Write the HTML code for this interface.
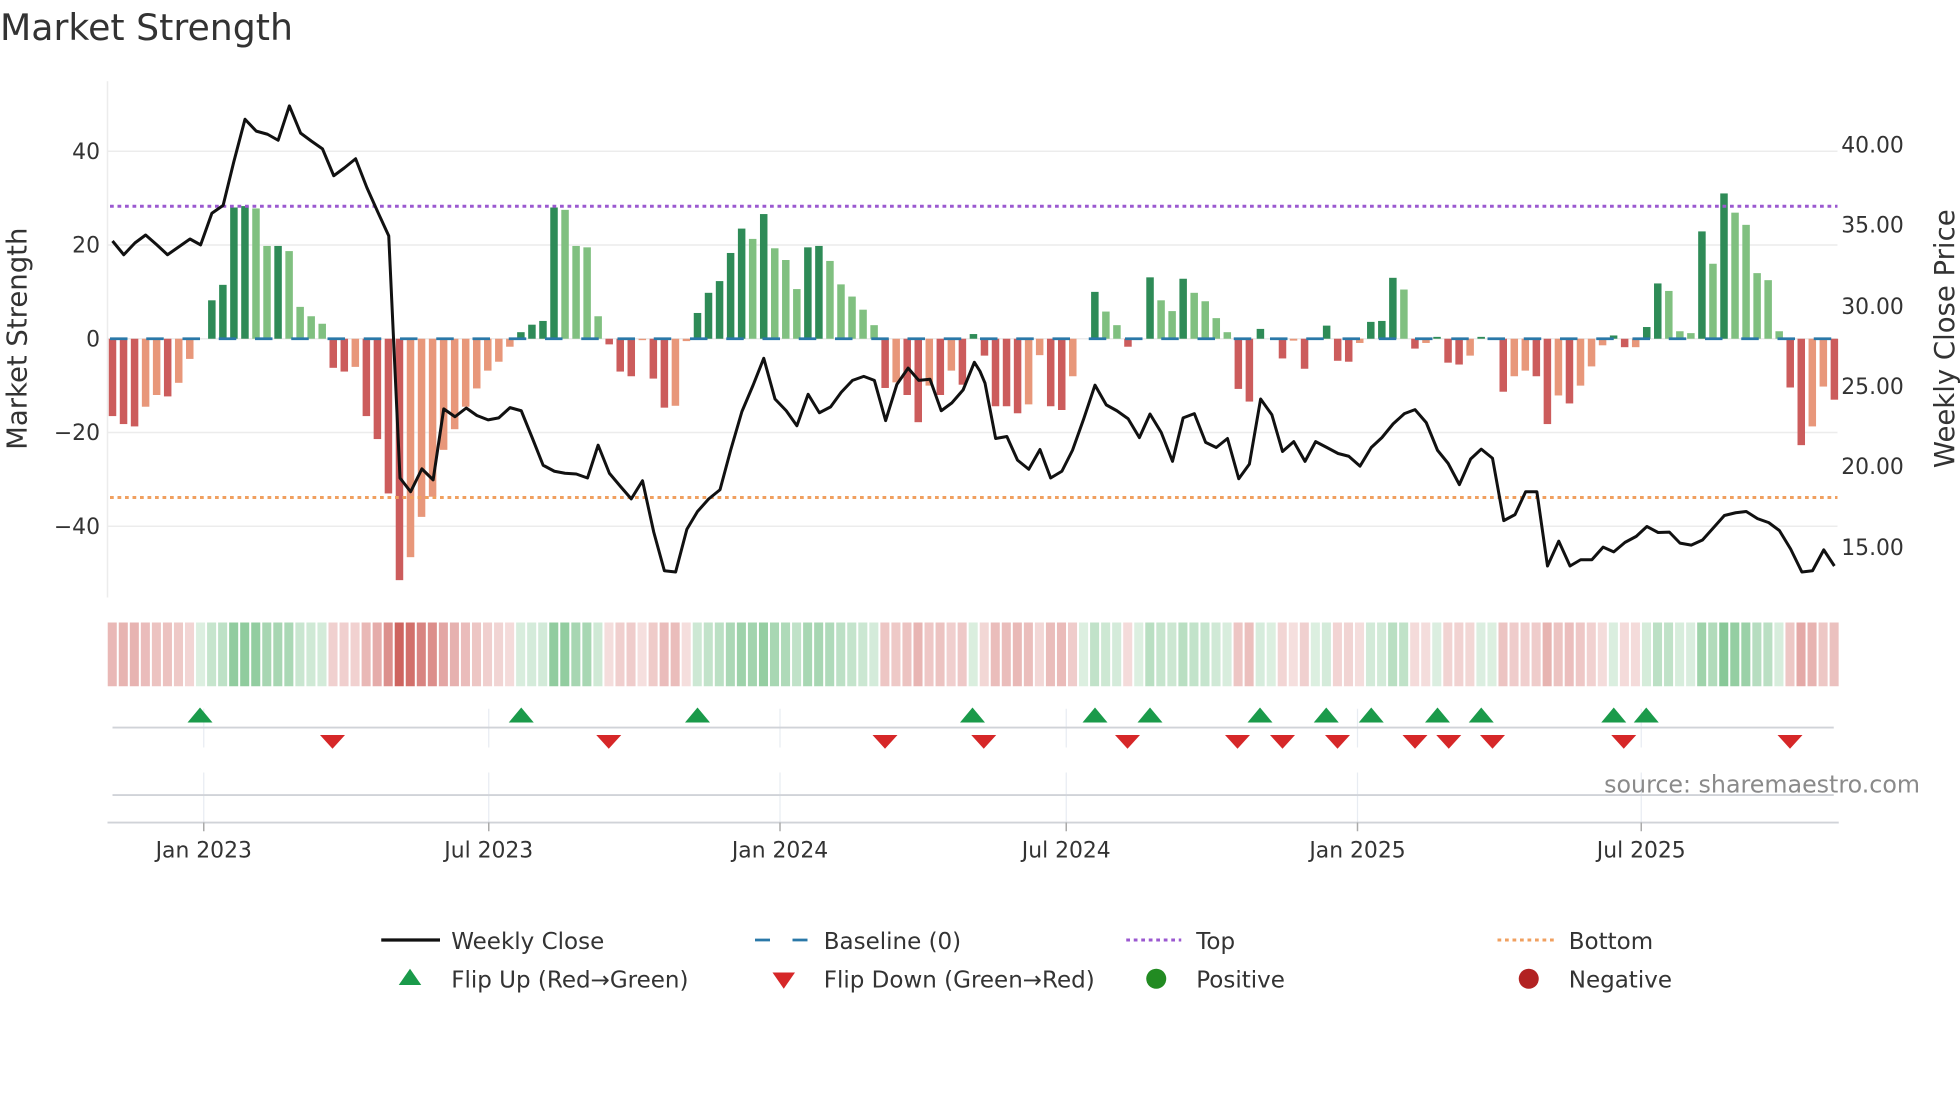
<!DOCTYPE html>
<html><head><meta charset="utf-8">
<style>
html,body{margin:0;padding:0;background:#fff;}
svg{display:block;font-family:"DejaVu Sans","Liberation Sans",sans-serif;}
</style></head>
<body>
<svg id="c" width="1960" height="1102" viewBox="0 0 1568 881.6" xmlns="http://www.w3.org/2000/svg">
<rect width="1568" height="882" fill="#fff"/>
<text x="0" y="32" font-size="29" fill="#333">Market Strength</text>
<g id="grid" stroke="#ececec" stroke-width="1.2">
<line x1="86" x2="1470" y1="121" y2="121"/>
<line x1="86" x2="1470" y1="196" y2="196"/>
<line x1="86" x2="1470" y1="271" y2="271"/>
<line x1="86" x2="1470" y1="346" y2="346"/>
<line x1="86" x2="1470" y1="421" y2="421"/>
</g>
<line x1="86" x2="86" y1="65" y2="478" stroke="#ececec" stroke-width="1.2"/>
<g font-size="17.5" fill="#333" text-anchor="end">
<text x="80" y="127">40</text><text x="80" y="202">20</text><text x="80" y="277">0</text>
<text x="80" y="352">−20</text><text x="80" y="427">−40</text>
</g>
<g font-size="17.5" fill="#333">
<text x="1473" y="122">40.00</text><text x="1473" y="186">35.00</text><text x="1473" y="251">30.00</text>
<text x="1473" y="315">25.00</text><text x="1473" y="379">20.00</text><text x="1473" y="444">15.00</text>
</g>
<text transform="translate(21,271) rotate(-90)" font-size="22" fill="#333" text-anchor="middle">Market Strength</text>
<text transform="translate(1563,271) rotate(-90)" font-size="22" fill="#333" text-anchor="middle">Weekly Close Price</text>
<g id="bars"></g>
<line x1="88" x2="1470" y1="271" y2="271" stroke="#2a78a8" stroke-width="2.2" stroke-dasharray="14 15"/>
<line x1="88" x2="1470" y1="165" y2="165" stroke="#9b59d0" stroke-width="2.4" stroke-dasharray="3 3"/>
<line x1="88" x2="1470" y1="398" y2="398" stroke="#f0a060" stroke-width="2.4" stroke-dasharray="3 3"/>
<polyline id="price" fill="none" stroke="#111" stroke-width="2.4" stroke-linejoin="round"/>
<g id="heat"></g>
<g stroke="#e8ecf2" stroke-width="1">
<line x1="163" x2="163" y1="567" y2="598"/><line x1="391" x2="391" y1="567" y2="598"/>
<line x1="624" x2="624" y1="567" y2="598"/><line x1="853" x2="853" y1="567" y2="598"/>
<line x1="1086" x2="1086" y1="567" y2="598"/><line x1="1313" x2="1313" y1="567" y2="598"/>
<line x1="163" x2="163" y1="618" y2="658"/><line x1="391" x2="391" y1="618" y2="658"/>
<line x1="624" x2="624" y1="618" y2="658"/><line x1="853" x2="853" y1="618" y2="658"/>
<line x1="1086" x2="1086" y1="618" y2="658"/><line x1="1313" x2="1313" y1="618" y2="658"/>
</g>
<line x1="90" x2="1467" y1="582" y2="582" stroke="#d0d3d8" stroke-width="1.5"/>
<line x1="90" x2="1467" y1="636" y2="636" stroke="#d0d3d8" stroke-width="1.5"/>
<line x1="86" x2="1471" y1="658" y2="658" stroke="#d0d3d8" stroke-width="1.5"/>
<g id="marks"></g>
<g stroke="#aaa" stroke-width="1.2">
<line x1="163" x2="163" y1="658" y2="665"/><line x1="391" x2="391" y1="658" y2="665"/>
<line x1="624" x2="624" y1="658" y2="665"/><line x1="853" x2="853" y1="658" y2="665"/>
<line x1="1086" x2="1086" y1="658" y2="665"/><line x1="1313" x2="1313" y1="658" y2="665"/>
</g>
<g font-size="17.5" fill="#333" text-anchor="middle">
<text x="163" y="686">Jan 2023</text><text x="391" y="686">Jul 2023</text><text x="624" y="686">Jan 2024</text>
<text x="853" y="686">Jul 2024</text><text x="1086" y="686">Jan 2025</text><text x="1313" y="686">Jul 2025</text>
</g>
<text x="1536" y="634" font-size="19" fill="#8a8a8a" text-anchor="end">source: sharemaestro.com</text>
<g font-size="18.4" fill="#333">
<line x1="305" x2="352" y1="752" y2="752" stroke="#111" stroke-width="2.6"/>
<text x="361" y="759">Weekly Close</text>
<line x1="604" x2="646" y1="752" y2="752" stroke="#2a78a8" stroke-width="2.2" stroke-dasharray="12 18"/>
<text x="659" y="759">Baseline (0)</text>
<line x1="901" x2="945" y1="752" y2="752" stroke="#9b59d0" stroke-width="2.4" stroke-dasharray="3 3"/>
<text x="957" y="759">Top</text>
<line x1="1198" x2="1243" y1="752" y2="752" stroke="#f0a060" stroke-width="2.4" stroke-dasharray="3 3"/>
<text x="1255" y="759">Bottom</text>
<polygon points="328,775 319,788 337,788" fill="#1a9a4a"/>
<text x="361" y="790">Flip Up (Red→Green)</text>
<polygon points="618,778 636,778 627,791" fill="#d62728"/>
<text x="659" y="790">Flip Down (Green→Red)</text>
<circle cx="925" cy="783" r="8" fill="#228b22"/>
<text x="957" y="790">Positive</text>
<circle cx="1223" cy="783" r="8" fill="#b22222"/>
<text x="1255" y="790">Negative</text>
</g>
</svg>
<script>
var B="-16.5R -18.2R -18.7R -14.5S -12S -12.3R -9.4S -4.3S 0G 8.2G 11.5G 28G 28.3G 27.8L 19.8L 19.8G 18.7L 6.8L 4.8L 3.2L -6.2R -7R -6S -16.5R -21.4R -33R -51.5R -46.6S -38S -33.7S -23.7S -19.3S -14.5S -10.6S -6.8S -4.9S -1.7S 1.4G 3G 3.8G 28G 27.5L 19.8L 19.5L 4.8L -1.2R -7R -8R -0.3S -8.5R -14.7R -14.3S -0.5S 5.5G 9.8G 12.3G 18.3G 23.5G 21.3L 26.6G 19.3L 16.8L 10.6L 19.5G 19.8G 16.6L 11.6L 9L 6.2L 2.9L -10.5R -9.3S -12R -17.8R -10S -12R -6.8S -9.8R 1G -3.6R -14.4R -14.4R -15.9R -14S -3.5S -14.4R -15.2R -8S 0G 10G 5.8L 2.9L -1.7R 0G 13.1G 8.2L 5.9L 12.8G 9.8L 8L 4.4L 1.4L -10.7R -13.4R 2.1G 0G -4.2R -0.4S -6.4R 0G 2.8G -4.7R -4.9R -0.9S 3.6G 3.8G 13G 10.5L -2.1R -0.9S 0.4G -5.1R -5.5R -3.6S 0.4G 0G -11.3R -8S -6.8S -8R -18.2R -12.1S -13.8R -10S -5.9S -1.4S 0.7G -1.8R -1.8S 2.5G 11.8G 10.2L 1.6L 1.2L 22.9G 16L 31G 26.9L 24.3L 14L 12.5L 1.6L -10.4R -22.7R -18.7S -10.2S -13R".split(" ");
var col={R:"#cc5c5c",S:"#e8977a",G:"#2e8b57",L:"#80c080"};
var NS="http://www.w3.org/2000/svg";
var n=B.length, x0=90, dx=(1467.5-90)/(n-1);
var bars=document.getElementById("bars"), heat=document.getElementById("heat");
function el(t,a,p){var e=document.createElementNS(NS,t);for(var k in a)e.setAttribute(k,a[k]);p.appendChild(e);return e;}
for(var i=0;i<n;i++){
 var v=parseFloat(B[i]), t=B[i].slice(-1), x=x0+i*dx;
 var h=Math.abs(v)*3.75, y=v>=0?271-h:271;
 if(h>0.1) el("rect",{x:x-3,y:y,width:6,height:h,fill:col[t]},bars);
 var a=Math.min(0.95,0.18+Math.abs(v)/40*0.55);
 var fc=v>=0?"rgba(60,165,85,"+a+")":"rgba(200,80,75,"+a+")";
 el("rect",{x:x-dx/2+0.6,y:498,width:dx-1.6,height:51,fill:fc},heat);
}
var P1=[[180,610],[198,645],[216,615],[233,595],[251,620],[268,645],[286,625],[304,605],[321,620],[339,540],[357,520],[374,410],[392,302],[410,332],[428,340],[445,355],[463,268],[481,337],[498,357],[516,377],[534,445],[551,425],[569,402],[587,475],[604,535],[622,597],[640,1210],[657,1245],[675,1187],[693,1215],[710,1035],[728,1055],[746,1033],[763,1052],[781,1063],[798,1058],[816,1032],[834,1040],[852,1110],[869,1178],[887,1193],[904,1198],[922,1200],[940,1210],[957,1127],[975,1198],[993,1232],[1010,1263],[1028,1217],[1046,1347],[1063,1445],[1081,1448],[1099,1340],[1116,1295],[1134,1263],[1152,1240],[1169,1140],[1187,1042],[1205,975],[1222,907],[1240,1010],[1258,1040],[1275,1078],[1293,998],[1311,1045],[1329,1030],[1346,993],[1364,963],[1382,953],[1399,963],[1417,1065],[1435,973],[1453,932],[1470,963],[1488,960],[1506,1040],[1523,1020],[1541,987],[1559,917]];
var P2=[[0,940],[8,970],[25,1110],[43,1105],[60,1165],[78,1188],[96,1138],[113,1210],[131,1193],[148,1140],[166,1060],[184,975],[202,1025],[219,1040],[237,1060],[255,1108],[272,1048],[290,1095],[308,1168],[325,1058],[343,1047],[361,1120],[378,1133],[396,1110],[414,1212],[431,1175],[449,1010],[467,1050],[484,1143],[502,1118],[520,1168],[537,1118],[555,1133],[573,1148],[590,1155],[608,1180],[626,1133],[643,1108],[661,1073],[679,1047],[696,1037],[714,1070],[732,1140],[749,1173],[767,1227],[785,1162],[802,1137],[820,1160],[838,1318],[856,1303],[873,1245],[891,1245],[908,1433],[926,1370],[944,1433],[961,1417],[979,1417],[997,1385],[1014,1397],[1032,1373],[1050,1358],[1067,1333],[1085,1348],[1103,1347],[1120,1375],[1138,1380],[1156,1367],[1173,1337],[1191,1305],[1209,1298],[1226,1295],[1244,1313],[1262,1323],[1279,1343],[1297,1390],[1315,1448],[1332,1445],[1350,1392],[1367,1433]];
var pts=[];
P1.forEach(function(p){pts.push((p[0]/2).toFixed(1)+","+(p[1]*0.316).toFixed(1));});
P2.forEach(function(p){pts.push((784+p[0]/2).toFixed(1)+","+(p[1]*0.316).toFixed(1));});
document.getElementById("price").setAttribute("points",pts.join(" "));
var marks=document.getElementById("marks");
[160,417,558,778,876,920,1008,1061,1097,1150,1185,1291,1317].forEach(function(x){
 el("polygon",{points:x+",566 "+(x-10)+",578 "+(x+10)+",578",fill:"#1a9a4a"},marks);});
[266,487,708,787,902,990,1026,1070,1132,1159,1194,1299,1432].forEach(function(x){
 el("polygon",{points:(x-10)+",588 "+(x+10)+",588 "+x+",599",fill:"#d62728"},marks);});
</script>
</body></html>
